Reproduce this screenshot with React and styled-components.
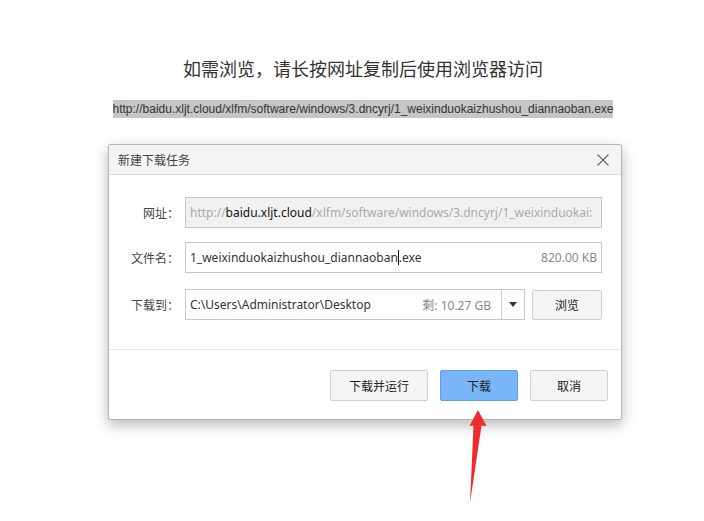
import React from "react";
import styled, { createGlobalStyle } from "styled-components";

const GlobalStyle = createGlobalStyle`
  html, body {
    margin: 0;
    padding: 0;
    background: #fff;
  }
  body {
    font-family: "Noto Sans", "Noto Sans CJK SC", sans-serif;
    color: #333;
  }
`;

const Page = styled.div`
  position: relative;
  width: 704px;
  height: 521px;
  box-sizing: border-box;
  padding: 56px 0 0 22px;
  display: flex;
  flex-direction: column;
  align-items: center;
`;

const Heading = styled.h1`
  margin: 0;
  font-family: "Noto Sans CJK SC", sans-serif;
  font-weight: 400;
  font-size: 18px;
  line-height: 24px;
  color: #333;
`;

const Link = styled.div`
  margin-top: 20px;
  font-family: "Liberation Sans", Arial, sans-serif;
  font-size: 12px;
  line-height: 18px;
  color: #333;
  background: #c6c6c6;
  white-space: nowrap;
`;

const Dialog = styled.div`
  margin-top: 26px;
  margin-left: 4px;
  width: 514px;
  box-sizing: border-box;
  border: 1px solid #b4b4b4;
  border-radius: 2px;
  background: #fff;
  box-shadow: 0 5px 14px rgba(0, 0, 0, 0.28);
  font-family: "Noto Sans", "Noto Sans CJK SC", sans-serif;
  font-size: 12px;
`;

const TitleBar = styled.div`
  height: 30px;
  box-sizing: border-box;
  display: flex;
  align-items: center;
  justify-content: space-between;
  padding: 0 11px 0 9px;
  background: #f4f4f4;
  border-bottom: 1px solid #dcdcdc;
  font-family: "Noto Sans CJK SC", sans-serif;
  color: #444;
`;

const Close = styled.span`
  display: flex;
  width: 14px;
  height: 14px;
`;

const Form = styled.div`
  display: flex;
  flex-direction: column;
  gap: 14px;
  padding: 22px 19px 29px 0;
  border-bottom: 1px solid #e6e6e6;
`;

const Row = styled.div`
  display: flex;
  align-items: center;
  height: 31px;
  margin-top: ${(p) => p.$offset || 0}px;
`;

const Label = styled.label`
  width: 70px;
  flex: none;
  margin-right: 6px;
  text-align: right;
  font-family: "Noto Sans CJK SC", sans-serif;
  color: #444;
`;

const Field = styled.div`
  flex: 1;
  height: 100%;
  box-sizing: border-box;
  display: flex;
  align-items: center;
  padding: 0 4px 0 4px;
  border: 1px solid #c8c8c8;
  background: ${(p) => (p.$disabled ? "#f1f1f1" : "#fff")};
  color: ${(p) => (p.$disabled ? "#aaa" : "#333")};
  white-space: nowrap;
  overflow: hidden;
  min-width: 0;
`;

const Strong = styled.span`
  color: #111;
`;

const Value = styled.span`
  flex: 1;
  overflow: hidden;
`;

const Caret = styled.span`
  display: inline-block;
  width: 1px;
  height: 15px;
  background: #111;
  vertical-align: -3px;
`;

const Meta = styled.span`
  color: #888;
  margin-left: 8px;
  padding-right: ${(p) => p.$pad || 0}px;
`;

const Chevron = styled.span`
  width: 22px;
  align-self: stretch;
  display: flex;
  align-items: center;
  justify-content: center;
  border-left: 1px solid #d0d0d0;
  margin-right: -4px;
  margin-left: 6px;
`;

const Button = styled.button`
  flex: none;
  width: ${(p) => p.$w}px;
  height: ${(p) => p.$h || 31}px;
  margin-left: ${(p) => p.$ml || 0}px;
  box-sizing: border-box;
  border: 1px solid ${(p) => (p.$primary ? "#5d9fe8" : "#d0d0d0")};
  border-radius: 2px;
  background: ${(p) => (p.$primary ? "#7ab6f7" : "#f5f5f5")};
  color: #222;
  font-family: "Noto Sans CJK SC", sans-serif;
  font-size: 12px;
  padding: 0;
`;

const Footer = styled.div`
  display: flex;
  justify-content: flex-end;
  gap: 12px;
  padding: 20px 13px 18px 0;
`;

const Arrow = styled.svg`
  position: absolute;
  left: 460px;
  top: 405px;
`;

export default function App() {
  return (
    <>
      <GlobalStyle />
      <Page>
        <Heading>如需浏览，请长按网址复制后使用浏览器访问</Heading>
        <Link>http://baidu.xljt.cloud/xlfm/software/windows/3.dncyrj/1_weixinduokaizhushou_diannaoban.exe</Link>
        <Dialog>
          <TitleBar>
            <span>新建下载任务</span>
            <Close>
              <svg width="14" height="14" viewBox="0 0 14 14">
                <path d="M1.5 1.5 L12.5 12.5 M12.5 1.5 L1.5 12.5" stroke="#666" strokeWidth="1.1" fill="none" />
              </svg>
            </Close>
          </TitleBar>
          <Form>
            <Row>
              <Label>网址：</Label>
              <Field $disabled>
                http://<Strong>baidu.xljt.cloud</Strong>/xlfm/software/windows/3.dncyrj/1_weixinduokai:
              </Field>
            </Row>
            <Row>
              <Label>文件名：</Label>
              <Field>
                <Value>
                  1_weixinduokaizhushou_diannaoban<Caret />.exe
                </Value>
                <Meta>820.00 KB</Meta>
              </Field>
            </Row>
            <Row $offset={2}>
              <Label>下载到：</Label>
              <Field>
                <Value>C:\Users\Administrator\Desktop</Value>
                <Meta $pad={4}>剩: 10.27 GB</Meta>
                <Chevron>
                  <svg width="8" height="5" viewBox="0 0 8 5">
                    <path d="M0 0 H8 L4 5 Z" fill="#333" />
                  </svg>
                </Chevron>
              </Field>
              <Button $w={70} $h={30} $ml={7}>浏览</Button>
            </Row>
          </Form>
          <Footer>
            <Button $w={98}>下载并运行</Button>
            <Button $w={78} $primary>下载</Button>
            <Button $w={78}>取消</Button>
          </Footer>
        </Dialog>
        <Arrow width="40" height="105" viewBox="0 0 40 105">
          <path d="M18 5 L26.5 21 L21.5 20.5 L10 98 L13.5 20.5 L9.5 21 Z" fill="#ee2b2f" />
        </Arrow>
      </Page>
    </>
  );
}
